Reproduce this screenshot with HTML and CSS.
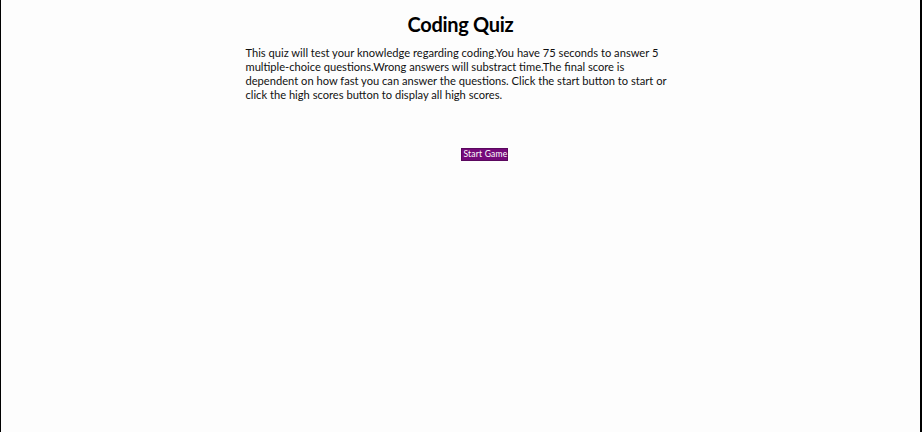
FILE: index.html
```html
<!DOCTYPE html>
<html lang="en">
<head>
<meta charset="utf-8">
<title>Coding Quiz</title>
<link rel="stylesheet" href="styles.css">
</head>
<body>
<main class="page">
  <h1 class="title">Coding Quiz</h1>
  <p class="intro">This quiz will test your knowledge regarding coding.You have 75 seconds to answer 5 multiple-choice questions.Wrong answers will substract time.The final score is dependent on how fast you can answer the questions. Click the start button to start or click the high scores button to display all high scores.</p>
  <div class="actions">
    <button class="start-btn" type="button">Start Game</button>
  </div>
</main>
</body>
</html>
```
FILE: styles.css
```css
html, body {
  margin: 0;
  padding: 0;
  height: 100%;
}
body {
  background: #fdfdfd;
  font-family: "Lato", "Open Sans", sans-serif;
  color: #000;
  border-left: 1px solid #000;
  border-right: 2px solid #000;
  box-sizing: border-box;
}
.page {
  display: flex;
  flex-direction: column;
  align-items: center;
  padding-top: 11px;
}
.title {
  margin: 0;
  font-size: 20px;
  letter-spacing: -0.3px;
  font-weight: 700;
  line-height: 26px;
}
.intro {
  width: 430px;
  margin: 9px 0 0;
  font-size: 11.15px;
  line-height: 14px;
  color: #111;
}
.actions {
  margin-top: 46px;
  padding-left: 47px;
}
.start-btn {
  display: block;
  background: #750a7a;
  color: #fff;
  border: 1px solid #5a085e;
  font-family: inherit;
  font-size: 8.5px;
  letter-spacing: 0.2px;
  padding: 0 2px;
  width: 47px;
  height: 13px;
  line-height: 11px;
  white-space: nowrap;
}
```
